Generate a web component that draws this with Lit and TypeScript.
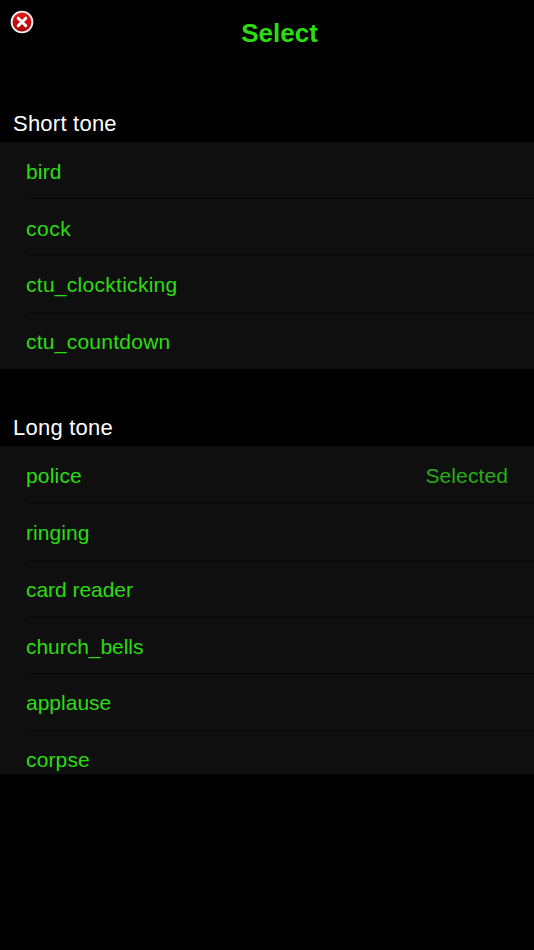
import { LitElement, html, css } from "lit";
import { customElement } from "lit/decorators.js";
import { styleMap } from "lit/directives/style-map.js";

interface Tone { name: string; tracking: number; selected?: boolean }

const SECTIONS: { title: string; tones: Tone[] }[] = [
  { title: "Short tone", tones: [
    { name: "bird", tracking: 0.15 },
    { name: "cock", tracking: 0.5 },
    { name: "ctu_clockticking", tracking: 0.28 },
    { name: "ctu_countdown", tracking: 0.25 },
  ] },
  { title: "Long tone", tones: [
    { name: "police", tracking: 0.18, selected: true },
    { name: "ringing", tracking: 0.05 },
    { name: "card reader", tracking: -0.04 },
    { name: "church_bells", tracking: -0.04 },
    { name: "applause", tracking: 0 },
    { name: "corpse", tracking: 0.15 },
  ] },
];

@customElement("app-root")
export class AppRoot extends LitElement {
  static styles = css`
    :host { display: block; height: 950px; background: #000; overflow: hidden;
      font-family: "Liberation Sans", Arial, sans-serif; color: #2bdd10; }
    * { box-sizing: border-box; }
    header { height: 64.6px; display: grid; grid-template-columns: 44px 1fr 44px; align-items: start; }
    .close { border: 0; background: none; padding: 0; width: 44px; height: 44px;
      display: flex; align-items: center; justify-content: center; }
    .close svg { display: block; }
    h1 { margin: 0; padding: 18px 0 0 25px; text-align: center; font-size: 26px; line-height: 30px; font-weight: 700; }
    main { height: 709.4px; overflow: hidden; }
    h2 { margin: 0; height: 77px; padding: 45.4px 0 0 13px; font-size: 22px; letter-spacing: 0.23px;
      line-height: 28px; font-weight: 400; color: #fff; }
    section + section h2 { height: 77.6px; }
    ul { margin: 0; padding: 0; list-style: none; background: #0f0f0f; }
    li { height: 56.75px; padding: 3.8px 26px 0; display: flex; align-items: center; justify-content: space-between;
      font-size: 21px; line-height: 28px; }
    li + li { background: linear-gradient(#080808, #080808) 26px 0 / 100% 1px no-repeat; }
    .state { color: #26ae13; letter-spacing: 0.1px; }
  `;

  render() {
    return html`
      <header>
        <button class="close" aria-label="Close">
          <svg width="26" height="26" viewBox="0 0 26 26">
            <defs><linearGradient id="red" x1="0" y1="0" x2="0" y2="1">
              <stop offset="0" stop-color="#e02020" /><stop offset="0.5" stop-color="#c80c0c" /><stop offset="1" stop-color="#a80808" />
            </linearGradient></defs>
            <circle cx="13" cy="13" r="10.4" fill="url(#red)" stroke="#f2eeee" stroke-width="1.9" />
            <path d="M9.2 9.2 16.8 16.8M16.8 9.2 9.2 16.8" stroke="#fff" stroke-width="3" stroke-linecap="round" />
          </svg>
        </button>
        <h1>Select</h1>
      </header>
      <main>
        ${SECTIONS.map((s) => html`<section>
          <h2>${s.title}</h2>
          <ul>${s.tones.map((t) => html`<li>
            <span style=${styleMap({ letterSpacing: `${t.tracking}px` })}>${t.name}</span>
            ${t.selected ? html`<span class="state">Selected</span>` : ""}
          </li>`)}</ul>
        </section>`)}
      </main>`;
  }
}
